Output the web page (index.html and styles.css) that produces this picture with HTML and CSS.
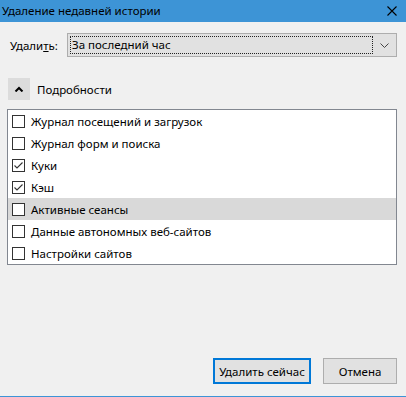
FILE: index.html
```html
<!DOCTYPE html>
<html lang="ru">
<head>
<meta charset="utf-8">
<link rel="stylesheet" href="styles.css">
</head>
<body>
<div class="dialog">
  <div class="titlebar">
    <span class="title">Удаление недавней истории</span>
    <svg class="close" width="10" height="10" viewBox="0 0 10 10"><path d="M0.5 0.5 L9.5 9.5 M9.5 0.5 L0.5 9.5" stroke="#000" stroke-width="1.1" fill="none"/></svg>
  </div>
  <div class="body">
    <div class="range">
      <span class="label">Удали<u>т</u>ь:</span>
      <div class="select">
        <span class="focus">За последний час</span>
        <svg class="arrow" width="9" height="5" viewBox="0 0 9 5"><path d="M0.5 0.5 L4.5 4.5 L8.5 0.5" stroke="#444" stroke-width="1" fill="none"/></svg>
      </div>
    </div>
    <div class="details">
      <div class="toggle"><svg width="10" height="6" viewBox="0 0 10 6"><path d="M1.5 5.5 L5 2 L8.5 5.5" stroke="#000" stroke-width="2" fill="none"/></svg></div>
      <span>Подробности</span>
    </div>
    <div class="list">
      <div class="item"><span class="box"></span>Журнал посещений и загрузок</div>
      <div class="item"><span class="box"></span>Журнал форм и поиска</div>
      <div class="item"><span class="box"><svg width="11" height="11" viewBox="0 0 11 11"><path d="M1.5 5.5 L4 8 L9.5 2.5" stroke="#333" stroke-width="1.1" fill="none"/></svg></span>Куки</div>
      <div class="item"><span class="box"><svg width="11" height="11" viewBox="0 0 11 11"><path d="M1.5 5.5 L4 8 L9.5 2.5" stroke="#333" stroke-width="1.1" fill="none"/></svg></span>Кэш</div>
      <div class="item active"><span class="box"></span>Активные сеансы</div>
      <div class="item"><span class="box"></span>Данные автономных веб-сайтов</div>
      <div class="item"><span class="box"></span>Настройки сайтов</div>
    </div>
    <div class="spacer"></div>
    <div class="buttons">
      <button class="btn default">Удалить сейчас</button>
      <button class="btn">Отмена</button>
    </div>
  </div>
</div>
</body>
</html>
```
FILE: styles.css
```css
html, body {
  margin: 0;
  padding: 0;
}
body {
  width: 406px;
  height: 397px;
  overflow: hidden;
  background: #f0f0f0;
  font-family: "Noto Sans", "DejaVu Sans", sans-serif;
  font-size: 11.5px;
  color: #000;
}
.dialog {
  width: 406px;
  height: 397px;
  box-sizing: border-box;
  border-bottom: 1px solid #3d94d6;
  display: flex;
  flex-direction: column;
}
.titlebar {
  height: 22px;
  background: #3d94d6;
  display: flex;
  align-items: center;
  justify-content: space-between;
  padding: 0 9px 0 2px;
  flex: none;
}
.title {
  font-size: 11.5px;
  line-height: 22px;
}
.close {
  display: block;
}
.body {
  flex: 1;
  display: flex;
  flex-direction: column;
  padding: 11px 9px 12px 7px;
}
.range {
  display: flex;
  align-items: center;
  height: 24px;
}
.label {
  width: 57px;
  padding-left: 3px;
  flex: none;
}
.select {
  flex: 1;
  height: 24px;
  box-sizing: border-box;
  border: 1px solid #adadad;
  background: #e1e1e1;
  display: flex;
  align-items: center;
  padding: 2px 0 2px 2px;
}
.focus {
  flex: 1;
  height: 18px;
  box-sizing: border-box;
  border: 1px dotted #222;
  line-height: 16px;
  padding-left: 1px;
  margin-right: 7px;
}
.arrow {
  margin-right: 7px;
  flex: none;
}
.details {
  display: flex;
  align-items: center;
  gap: 7px;
  margin-top: 21px;
  padding-left: 1px;
}
.toggle {
  width: 22px;
  height: 22px;
  background: #dcdcdc;
  display: flex;
  align-items: center;
  justify-content: center;
}
.list {
  margin-top: 9px;
  border: 1px solid #828790;
  background: #fff;
  display: flex;
  flex-direction: column;
}
.item {
  height: 22px;
  display: flex;
  align-items: center;
  padding-left: 4px;
}
.item.active {
  background: #d9d9d9;
}
.box {
  width: 13px;
  height: 13px;
  box-sizing: border-box;
  border: 1px solid #333;
  background: #fff;
  margin-right: 6px;
  display: flex;
  align-items: center;
  justify-content: center;
  flex: none;
}
.box svg {
  display: block;
}
.spacer {
  flex: 1;
}
.buttons {
  display: flex;
  justify-content: flex-end;
  gap: 12px;
}
.btn {
  font-family: inherit;
  font-size: 11.5px;
  color: #000;
  height: 26px;
  box-sizing: border-box;
  background: #e1e1e1;
  border: 1px solid #adadad;
  padding: 0;
  width: 74px;
}
.btn.default {
  border: 2px solid #0078d7;
  width: 98px;
}
```
